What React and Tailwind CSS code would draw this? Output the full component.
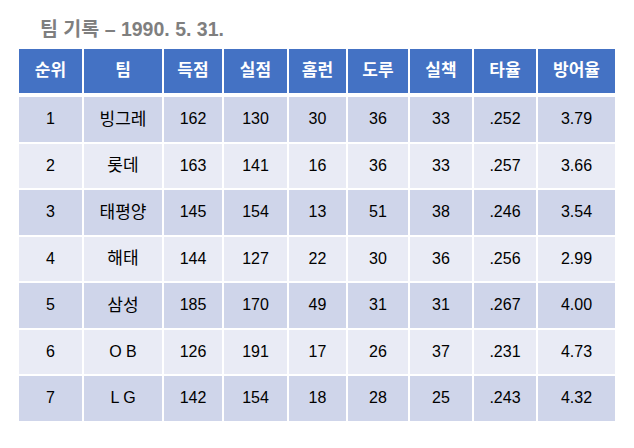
import React from "react";

const cols = ["순위", "팀", "득점", "실점", "홈런", "도루", "실책", "타율", "방어율"];
const widths = ["w-[63px]", "w-[78px]", "w-[58px]", "w-[63px]", "w-[57px]", "w-[60px]", "w-[62px]", "w-[62px]", "w-[77px]"];
const rows = [
  ["1", "빙그레", "162", "130", "30", "36", "33", ".252", "3.79"],
  ["2", "롯데", "163", "141", "16", "36", "33", ".257", "3.66"],
  ["3", "태평양", "145", "154", "13", "51", "38", ".246", "3.54"],
  ["4", "해태", "144", "127", "22", "30", "36", ".256", "2.99"],
  ["5", "삼성", "185", "170", "49", "31", "31", ".267", "4.00"],
  ["6", "O B", "126", "191", "17", "26", "37", ".231", "4.73"],
  ["7", "L G", "142", "154", "18", "28", "25", ".243", "4.32"],
];

const font = { fontFamily: '"Liberation Sans", "Noto Sans CJK KR", sans-serif' };

export default function App() {
  return (
    <div className="w-[634px] h-[448px] bg-white" style={font}>
      <div className="pl-[40px] pt-[17px] h-[49px] text-[19.5px] leading-[24px] font-bold text-[#7f7f7f]">
        팀 기록 – 1990. 5. 31.
      </div>
      <div className="ml-[19px] flex flex-col">
        <div className="flex gap-[2px] h-[44px]">
          {cols.map((c, i) => (
            <div key={i} className={`${widths[i]} bg-[#4472c4] text-white font-bold text-[17px] flex items-center justify-center`}>
              {c}
            </div>
          ))}
        </div>
        <div className="flex flex-col gap-[2px] mt-[4px]">
          {rows.map((r, ri) => (
            <div key={ri} className="flex gap-[2px] h-[44.5px]">
              {r.map((v, i) => (
                <div
                  key={i}
                  className={`${widths[i]} ${ri % 2 === 0 ? "bg-[#cfd5ea]" : "bg-[#e9ebf5]"} text-black ${i === 1 && ri < 5 ? "text-[17px]" : "text-[16px]"} flex items-center justify-center`}
                >
                  {v}
                </div>
              ))}
            </div>
          ))}
        </div>
      </div>
    </div>
  );
}
